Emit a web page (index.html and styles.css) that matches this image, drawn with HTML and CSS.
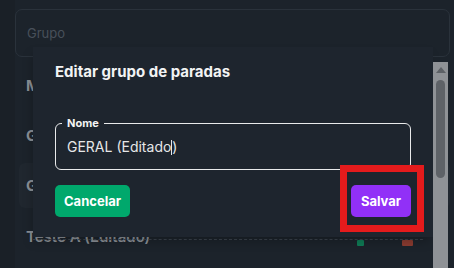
FILE: index.html
```html
<!DOCTYPE html>
<html lang="pt">
<head>
    <meta charset="UTF-8">
    <meta name="viewport" content="width=device-width, initial-scale=1.0">
    <title>Grupos de paradas</title>
    <link rel="stylesheet" href="styles.css">
</head>
<body>
    <div class="page">
        <div class="search">Grupo</div>
        <div class="list">
            <div class="item">M</div>
            <div class="item">G</div>
            <div class="item active">G</div>
            <div class="item last">Teste A (Editado)
                <span class="ico green"></span>
                <span class="ico red"></span>
            </div>
        </div>
    </div>

    <div class="dialog">
        <h2 class="dialog-title">Editar grupo de paradas</h2>
        <div class="field">
            <span class="legend">Nome</span>
            <span class="value">GERAL (Editado<span class="caret"></span>)</span>
        </div>
        <div class="actions">
            <button class="btn cancel">Cancelar</button>
            <button class="btn save">Salvar</button>
        </div>
    </div>

    <div class="highlight"></div>

    <div class="scrollbar">
        <div class="arrow"></div>
        <div class="thumb"></div>
    </div>
</body>
</html>
```

FILE: styles.css
```css
* { box-sizing: border-box; }
body { margin: 0; width: 454px; height: 268px; overflow: hidden; font-family: Inter, "Noto Sans", sans-serif; background: linear-gradient(to right, #1a2027 0 15px, #1c232b 15px); color: #fff; position: relative; }
.page { padding: 9px 4px 0 15px; }
.search { height: 48px; border: 1px solid #2a323b; border-radius: 7px; padding-left: 11px; line-height: 46px; font-size: 13px; color: #48505a; }
.list { margin-top: 4px; padding-left: 4px; }
.item { height: 50px; line-height: 50px; padding-left: 7px; font-size: 15px; font-weight: 700; color: #8a8f95; position: relative; }
.item.active { background: #20272f; border-radius: 6px; height: 45px; line-height: 45px; margin: 2px 0 3px; }
.item.last { font-weight: 600; line-height: 52px; }
.item.last::after { content: ""; position: absolute; left: 14px; right: 27px; top: 28px; border-top: 1px dashed #3a434c; }
.ico { position: absolute; top: 29px; height: 6px; border-radius: 1px; }
.ico.green { left: 338px; width: 7px; background: #0f7a55; }
.ico.red { left: 383px; width: 11px; background: #8a3b30; }

.dialog { position: absolute; left: 33px; top: 47px; width: 400px; height: 190px; background: #1e252e; box-shadow: -2px 6px 10px -2px rgba(0, 0, 0, 0.25); padding: 15px 22px 0; }
.dialog-title { margin: 0; font-size: 15px; font-weight: 700; line-height: 20px; color: #f2f3f4; }
.field { position: relative; margin-top: 41px; height: 47px; border: 1px solid #e9eaeb; border-radius: 6px; padding: 0 11px; line-height: 45px; }
.legend { position: absolute; left: 6px; top: -8px; padding: 0 5px; background: #1e252e; font-size: 11px; font-weight: 700; line-height: 14px; color: #f4f4f4; }
.value { font-size: 14px; color: #e6e7e8; }
.caret { display: inline-block; width: 1px; height: 15px; background: #e6e7e8; vertical-align: -3px; }
.actions { display: flex; justify-content: space-between; margin-top: 15px; }
.btn { border: none; height: 32px; border-radius: 5px; font-family: inherit; font-size: 13px; font-weight: 700; color: #fff; padding: 0; }
.cancel { width: 75px; background: #00a86c; }
.save { width: 60px; background: #9130f7; }

.highlight { position: absolute; left: 340px; top: 165px; width: 84px; height: 67px; border: 7px solid #e41b1c; }

.scrollbar { position: absolute; left: 433px; top: 62px; width: 15px; height: 206px; background: #8f9296; }
.arrow { margin: 5px auto 0; width: 0; height: 0; border-left: 5px solid transparent; border-right: 5px solid transparent; border-bottom: 6px solid #5d6166; }
.thumb { margin: 7px auto 0; width: 9px; height: 98px; border-radius: 5px; background: #5e6267; }
```
